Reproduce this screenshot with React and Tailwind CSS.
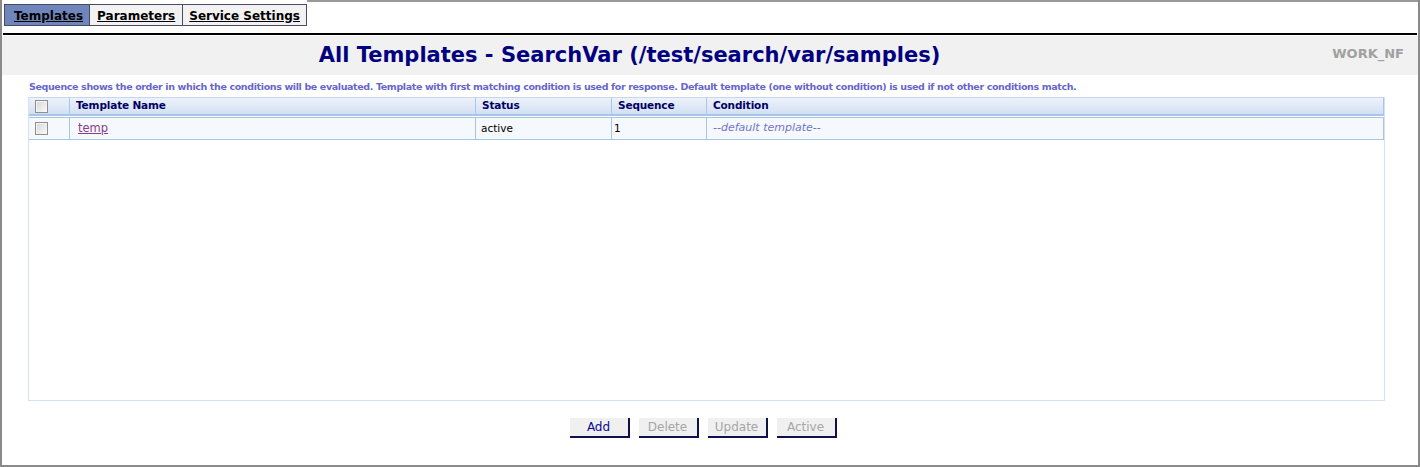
import React from "react";

const font = { fontFamily: '"DejaVu Sans", Verdana, sans-serif' };

function Check() {
  return (
    <div className="w-[13px] h-[13px] border border-[#8e8f8f] bg-gradient-to-br from-[#d6d6d6] to-[#fbfbfb] shadow-[inset_1px_1px_0_#f4f4f4]" />
  );
}

function Btn({ label, active }) {
  return (
    <button
      className={
        "w-[60px] h-[20px] bg-[#f0f0f0] border-r-2 border-b-2 border-[#10104a] text-[12px] leading-none " +
        (active ? "text-[#0a0a9a]" : "text-[#a6a6a6]")
      }
    >
      {label}
    </button>
  );
}

export default function App() {
  return (
    <div
      style={font}
      className="w-[1420px] h-[467px] bg-white flex flex-col border-l-2 border-r-2 border-b-2 border-[#8a8a8a] overflow-hidden"
    >
      {/* tabs */}
      <div className="flex h-[33px]">
        <div className="flex h-[22px] mt-[4px] ml-[2px] border border-[#4a4a66] text-[12px] font-bold">
          <div className="bg-[#6f86bb] pl-[9px] pr-[6px] pt-[1px] flex items-center underline text-black border-r border-[#4a4a66]">Templates</div>
          <div className="bg-[#f2f2f2] px-[7px] pt-[1px] flex items-center underline text-black border-r border-[#4a4a66]">Parameters</div>
          <div className="bg-[#f2f2f2] px-[6px] pt-[1px] flex items-center underline text-black">Service Settings</div>
        </div>
        <div className="flex-1 border-t-2 border-[#9a9a9a]" />
      </div>
      <div className="h-[2px] bg-black mx-[1px]" />
      {/* header band */}
      <div className="h-[39px] mt-[1px] bg-[#f1f1f1] flex items-center">
        <div className="w-[1255px] text-center text-[21px] font-bold text-[#000080]">
          All Templates - SearchVar (/test/search/var/samples)
        </div>
        <div className="flex-1 text-right pr-[14px] pb-[3px] text-[13px] font-bold text-[#a0a0a0]">WORK_NF</div>
      </div>
      {/* description */}
      <div className="pl-[27px] pt-[6px] h-[22px] text-[9.5px] tracking-[-0.37px] font-bold text-[#6666cc] leading-[12px] whitespace-nowrap">
        Sequence shows the order in which the conditions will be evaluated. Template with first matching condition is used for response. Default template (one without condition) is used if not other conditions match.
      </div>
      {/* table */}
      <div className="ml-[26px] w-[1357px] h-[304px] border border-[#d6e2f2] border-t-0 flex flex-col">
        <div className="flex h-[19px] bg-gradient-to-b from-[#edf2fa] to-[#d3e0f3] border-b-2 border-[#a9c4e9] border-t border-t-[#c5d6ee] text-[10.5px] tracking-[-0.15px] font-bold text-[#000066]">
          <div className="w-[41px] flex items-center pl-[6px] border-r border-[#a9c4e9]"><Check /></div>
          <div className="w-[406px] flex items-center pl-[6px] border-r border-[#a9c4e9]">Template Name</div>
          <div className="w-[136px] flex items-center pl-[6px] border-r border-[#a9c4e9]">Status</div>
          <div className="w-[95px] flex items-center pl-[6px] border-r border-[#a9c4e9]">Sequence</div>
          <div className="flex-1 flex items-center pl-[6px] border-r border-[#a9c4e9]">Condition</div>
        </div>
        <div className="flex h-[23px] mt-[1px] bg-[#f5f9fd] border-t border-b border-[#a9c4e9] text-[10.5px]">
          <div className="w-[41px] flex items-center pl-[6px] border-r border-[#a9c4e9]"><Check /></div>
          <div className="w-[406px] flex items-center pl-[8px] border-r border-[#a9c4e9] text-[11.5px] text-[#8b3d8b] underline">temp</div>
          <div className="w-[136px] flex items-center pl-[5px] border-r border-[#a9c4e9] text-black">active</div>
          <div className="w-[95px] flex items-center pl-[2px] border-r border-[#a9c4e9] text-black">1</div>
          <div className="flex-1 flex items-center pl-[6px] border-r border-[#a9c4e9] italic text-[11px] text-[#7474cc]">--default template--</div>
        </div>
      </div>
      {/* buttons */}
      <div className="flex justify-center gap-[9px] mt-[17px] pr-[14px]">
        <Btn label="Add" active />
        <Btn label="Delete" />
        <Btn label="Update" />
        <Btn label="Active" />
      </div>
    </div>
  );
}
